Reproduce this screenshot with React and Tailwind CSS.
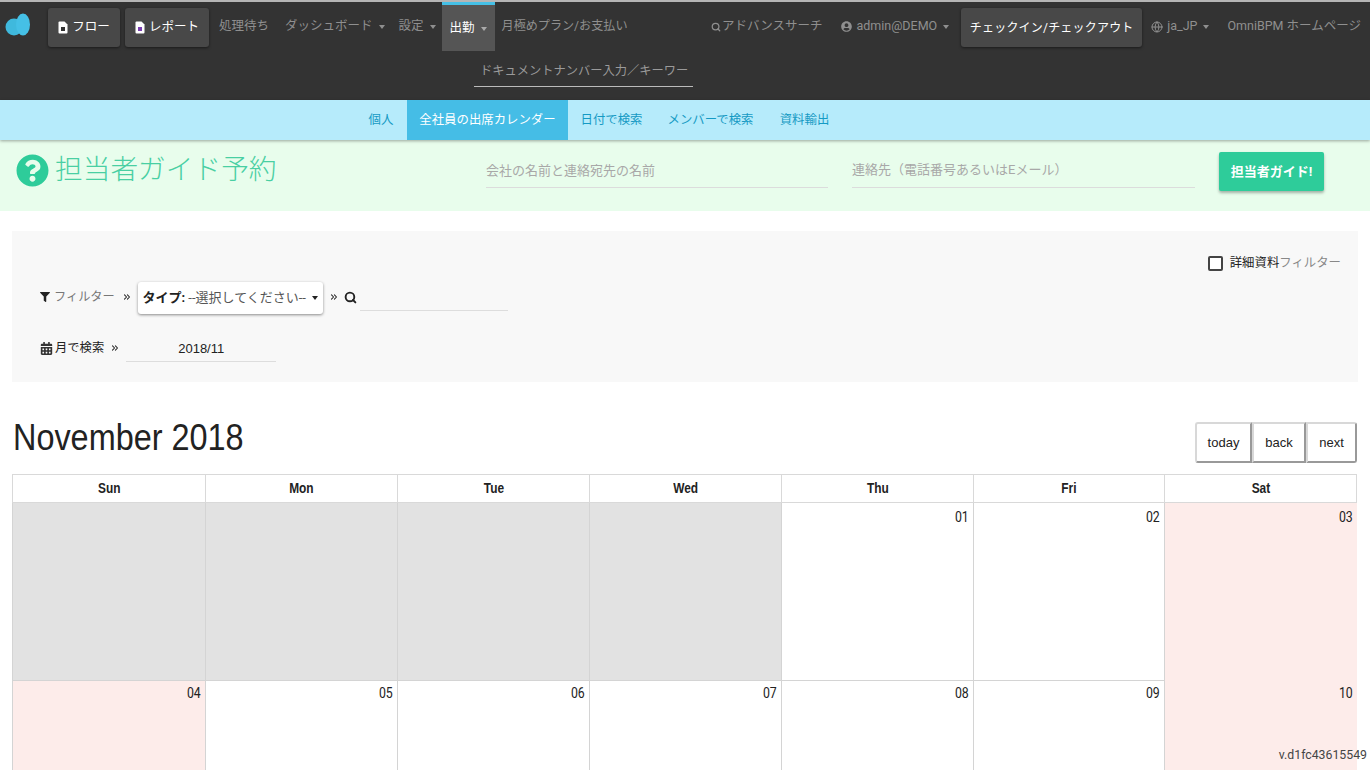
import { ChevronsRight, Globe, Search } from "lucide-react";
import { FaCalendarAlt, FaFilter, FaQuestionCircle, FaUserCircle } from "react-icons/fa";

const WEEK_DAYS = ["Sun", "Mon", "Tue", "Wed", "Thu", "Fri", "Sat"];

const ROW_ONE = [
  { tone: "off" }, { tone: "off" }, { tone: "off" }, { tone: "off" },
  { day: "01" }, { day: "02" }, { day: "03", tone: "rest" },
];
const ROW_TWO = [
  { day: "04", tone: "rest" }, { day: "05" }, { day: "06" }, { day: "07" },
  { day: "08" }, { day: "09" }, { day: "10", tone: "rest" },
];

const SUB_NAV = [
  { label: "個人", cls: "w-[52px]" },
  { label: "全社員の出席カレンダー", cls: "w-[161px]", active: true },
  { label: "日付で検索", cls: "w-[87px]" },
  { label: "メンバーで検索", cls: "w-[111px]" },
  { label: "資料輸出", cls: "w-[77px]" },
];

function Caret() {
  return <span className="inline-block ml-1.5 mt-px border-x-[3px] border-t-[4px] border-x-transparent border-t-current" />;
}

function DocIcon({ color }) {
  return (
    <svg width="10" height="13" viewBox="0 0 10 13" className="shrink-0">
      <path d="M0.5 1.5 Q0.5 0.5 1.5 0.5 H6.5 L9.5 3.5 V11.5 Q9.5 12.5 8.5 12.5 H1.5 Q0.5 12.5 0.5 11.5 Z" fill="#fff" />
      <rect x="3" y="6" width="4" height="4" fill={color} />
    </svg>
  );
}

function DarkButton({ children, cls }) {
  return (
    <button className={`h-[39px] flex items-center justify-center gap-1 rounded-[3px] bg-[#484848] text-white text-[12.5px] shadow-[0_1px_3px_rgba(0,0,0,0.5)] ${cls}`}>
      {children}
    </button>
  );
}

function NavLink({ children, cls = "" }) {
  return <span className={`flex items-center whitespace-nowrap text-[12.5px] text-[#8f8f8f] ${cls}`}>{children}</span>;
}

function Cell({ day, tone, last, first, pad = "pt-[4px]" }) {
  const bg = tone === "off" ? "bg-[#e2e2e2]" : tone === "rest" ? "bg-[#fdecea]" : "bg-white";
  const border = tone === "rest" && last ? "" : "border-r border-b border-[#d4d4d4]";
  return (
    <div className={`${bg} ${border} ${first ? "border-l border-[#d4d4d4]" : ""} ${pad} text-right pr-[4px] text-[14px] leading-5 text-[#222]`}>
      <span className="inline-block origin-right scale-x-[0.88]">{day}</span>
    </div>
  );
}

export default function App() {
  return (
    <div className="relative h-screen overflow-hidden bg-white font-['Roboto','Noto_Sans_CJK_JP',sans-serif] text-[#222]">
      {/* top bar */}
      <header className="h-[100px] bg-[#333] border-t-2 border-[#b5b5b5] shadow-[0_1px_2px_rgba(0,0,0,0.4)]">
        <div className="flex items-start h-[49px]">
          <svg width="30" height="24" viewBox="0 0 30 24" className="ml-[5px] mt-[11px] shrink-0">
            <circle cx="9" cy="14" r="8.5" fill="#3fb9dd" />
            <ellipse cx="18" cy="11.5" rx="7" ry="11" fill="#45c0e6" />
          </svg>
          <div className="flex gap-[5px] ml-[13px] mt-[6px]">
            <DarkButton cls="w-[72px]"><DocIcon color="#333" /> フロー</DarkButton>
            <DarkButton cls="w-[84px]"><DocIcon color="#7a3fb0" /> レポート</DarkButton>
          </div>
          <div className="flex h-[49px] items-center">
            <NavLink cls="ml-[10px]">処理待ち</NavLink>
            <NavLink cls="ml-[16px]">ダッシュボード<Caret /></NavLink>
            <NavLink cls="ml-[14px]">設定<Caret /></NavLink>
            <div className="ml-[6px] h-[49px] w-[53px] flex items-center justify-center bg-[#555] border-t-[3px] border-[#45c0e6] text-white text-[12.5px]">
              出勤<span className="text-[#aaa] flex"><Caret /></span>
            </div>
            <NavLink cls="ml-[7px]"><span className="text-[12.1px]">月極めプラン/お支払い</span></NavLink>
          </div>
          <div className="flex-1" />
          <div className="flex h-[49px] items-center pr-[9px]">
            <NavLink><Search size={10} strokeWidth={3} className="mr-px" />アドバンスサーチ</NavLink>
            <NavLink cls="ml-[19px]"><FaUserCircle size={11} className="mr-1" />admin@DEMO<Caret /></NavLink>
            <DarkButton cls="w-[181px] ml-[12px] mt-[2px]"><span className="text-[12px] tracking-[0.2px] whitespace-nowrap">チェックイン/チェックアウト</span></DarkButton>
            <NavLink cls="ml-[9px]"><Globe size={12} className="mr-1" />ja_JP<Caret /></NavLink>
            <NavLink cls="ml-[18px]">OmniBPM ホームページ</NavLink>
          </div>
        </div>
        <div className="ml-[474px] w-[219px] h-[36px] border-b border-[#bbb] pl-[6px] pt-[10px] text-[12.25px] leading-5 text-[#9a9a9a] whitespace-nowrap">
          ドキュメントナンバー入力／キーワー
        </div>
      </header>

      {/* sub nav */}
      <nav className="h-[40px] bg-[#b6ebfb] flex pl-[355px] shadow-[0_1px_3px_rgba(0,0,0,0.35)] relative">
        {SUB_NAV.map((item) => (
          <span
            key={item.label}
            className={`${item.cls} flex items-center justify-center whitespace-nowrap text-[12.4px] ${item.active ? "bg-[#45bde6] text-white" : "text-[#159ac4]"}`}
          >
            {item.label}
          </span>
        ))}
      </nav>

      {/* guide banner */}
      <section className="h-[71px] bg-[#e8fdec] flex items-start pl-[16px]">
        <FaQuestionCircle size={33} className="text-[#2ecc9a] mt-[14px] shrink-0" />
        <h1 className="ml-[6px] mt-[10px] w-[431px] text-[27.7px] leading-10 font-light text-[#49cfa3] whitespace-nowrap">担当者ガイド予約</h1>
        <div className="w-[342px] h-[34px] mt-[14px] border-b border-[#dcdcdc] pt-[7px] text-[13px] leading-5 text-[#a8a8a8] whitespace-nowrap">会社の名前と連絡宛先の名前</div>
        <div className="ml-[24px] w-[343px] h-[34px] mt-[14px] border-b border-[#dcdcdc] pt-[6px] text-[13px] leading-5 text-[#a8a8a8] whitespace-nowrap">連絡先（電話番号あるいはEメール）</div>
        <button className="ml-[24px] mt-[12px] w-[105px] h-[39px] rounded-[2px] bg-[#2ecc9a] text-white text-[13px] font-bold shadow-[0_2px_3px_rgba(0,0,0,0.3)]">担当者ガイド!</button>
      </section>

      {/* filters */}
      <section className="mx-[12px] mt-[20px] h-[151px] bg-[#f8f8f8] relative pl-[28px] text-[12.5px]">
        <label className="absolute right-[17px] top-[23px] flex items-center gap-[7px] text-[12.4px]">
          <span className="w-[15px] h-[15px] border-2 border-[#444] rounded-[2px] bg-white" />
          <span>詳細資料<span className="text-[#888]">フィルター</span></span>
        </label>
        <div className="flex items-center pt-[50px] h-[83px]">
          <FaFilter size={10} className="text-[#222] mr-[4px] -mt-[1px]" />
          <span className="text-[#777] text-[12.2px] -mt-[1px]">フィルター</span>
          <ChevronsRight size={10} strokeWidth={2.5} className="ml-[7px] -mt-[1px]" />
          <div className="ml-[6px] w-[185px] h-[32px] flex items-center justify-center rounded-[3px] bg-white shadow-[0_1px_3px_rgba(0,0,0,0.45)] whitespace-nowrap text-[13px]">
            <b>タイプ:</b>&nbsp;<span className="text-[#555]">--選択してください--</span><Caret />
          </div>
          <ChevronsRight size={10} strokeWidth={2.5} className="ml-[6px] -mt-[1px]" />
          <Search size={13} strokeWidth={3.5} className="ml-[5px]" />
          <div className="ml-[3px] w-[148px] h-[25px] border-b border-[#ddd] mt-[1px]" />
        </div>
        <div className="flex items-center mt-[18px] h-[32px]">
          <FaCalendarAlt size={13} className="text-[#333] mr-[2px]" />
          <span className="text-[12.3px]">月で検索</span>
          <ChevronsRight size={10} strokeWidth={2.5} className="ml-[6px]" />
          <div className="ml-[6px] w-[150px] h-[28px] border-b border-[#ddd] text-center text-[13px] leading-[30px] font-['Liberation_Sans',sans-serif]">2018/11</div>
        </div>
      </section>

      {/* calendar */}
      <section className="mx-[13px] mt-[32px]">
        <div className="flex items-center justify-between h-[47px]">
          <h2 className="text-[36px] leading-none font-['Liberation_Sans',sans-serif] scale-x-[0.9] origin-left whitespace-nowrap">November 2018</h2>
          <div className="flex font-['Liberation_Sans',sans-serif] text-[13px] mt-[10px]">
            <button className="w-[57px] h-[41px] bg-white rounded-l-[3px] border-2 border-[#d8d8d8] border-r-[#999] border-b-[#999]">today</button>
            <button className="w-[54px] h-[41px] bg-white border-2 border-[#d8d8d8] border-r-[#999] border-b-[#999]">back</button>
            <button className="w-[51px] h-[41px] bg-white rounded-r-[3px] border-2 border-[#d8d8d8] border-r-[#999] border-b-[#999]">next</button>
          </div>
        </div>
        <div className="grid grid-cols-[194px_192px_192px_192px_192px_191px_192px] mt-[13px] -ml-px">
          {WEEK_DAYS.map((d, i) => (
            <div key={d} className={`h-[29px] border-y border-r border-[#d9d9d9] ${i === 0 ? "border-l" : ""} flex items-center justify-center text-[14px] font-bold font-['Liberation_Sans',sans-serif]`}>
              <span className="inline-block scale-x-[0.85]">{d}</span>
            </div>
          ))}
        </div>
        <div className="grid grid-cols-[194px_192px_192px_192px_192px_191px_192px] grid-rows-[178px_100px] -ml-px">
          {ROW_ONE.map((c, i) => <Cell key={i} {...c} first={i === 0} last={i === 6} />)}
          {ROW_TWO.map((c, i) => <Cell key={i} {...c} first={i === 0} last={i === 6} pad="pt-[2px]" />)}
        </div>
      </section>

      <span className="absolute right-[3px] bottom-[5px] text-[12.3px] leading-5 text-[#444]">v.d1fc43615549</span>
    </div>
  );
}
